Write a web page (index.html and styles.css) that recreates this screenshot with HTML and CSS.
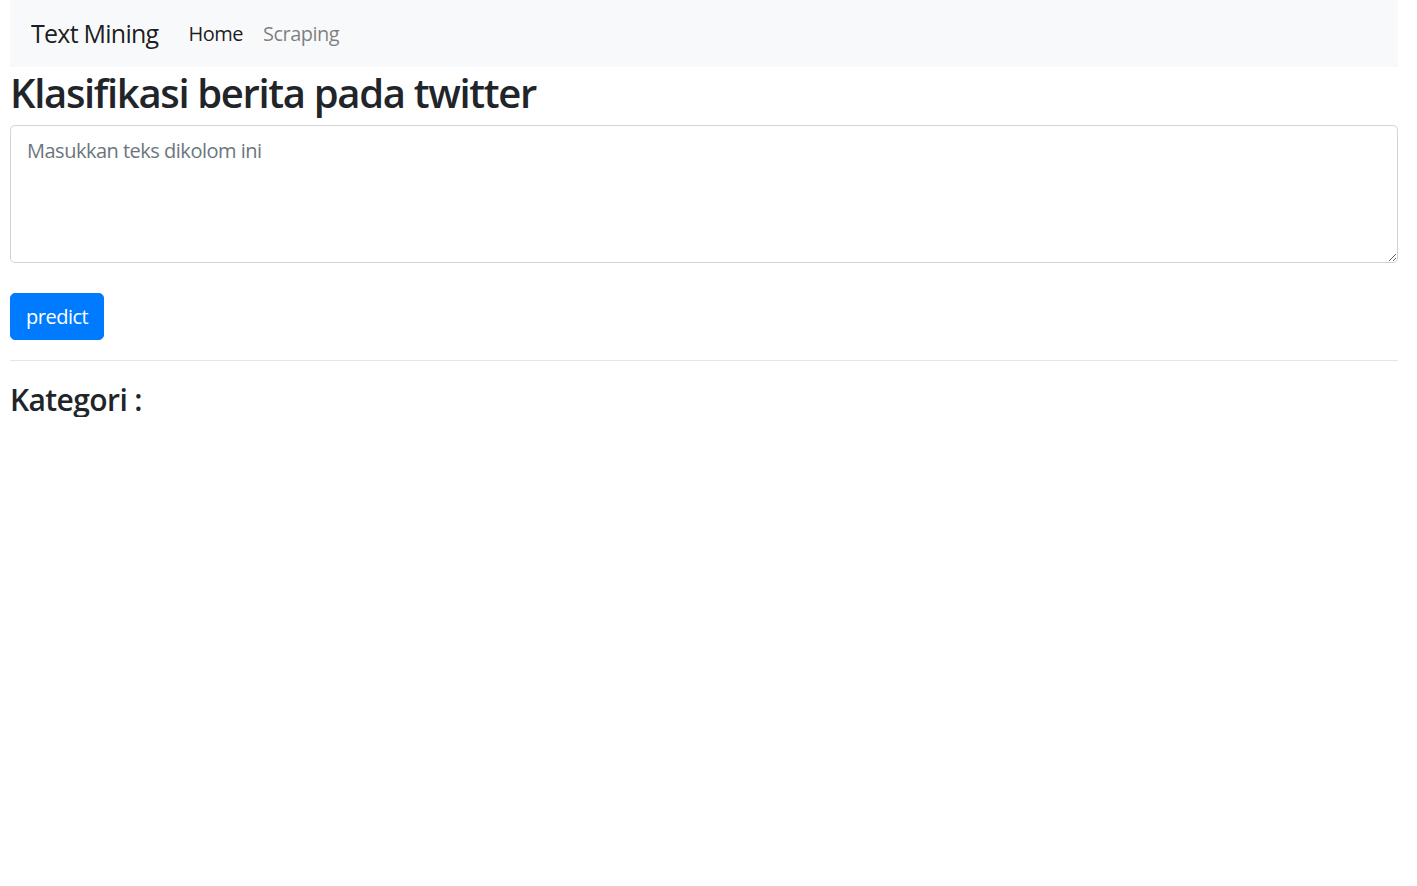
FILE: index.html
```html
<!DOCTYPE html>
<html lang="id">
<head>
<meta charset="utf-8">
<title>Text Mining</title>
<link rel="stylesheet" href="styles.css">
</head>
<body>
<div class="page">
  <nav class="navbar">
    <a class="brand" href="#">Text Mining</a>
    <ul class="nav">
      <li><a class="nav-link active" href="#">Home</a></li>
      <li><a class="nav-link" href="#">Scraping</a></li>
    </ul>
  </nav>
  <h2 class="title">Klasifikasi berita pada twitter</h2>
  <form class="form">
    <textarea class="form-control" rows="4" placeholder="Masukkan teks dikolom ini"></textarea>
    <button class="btn" type="button">predict</button>
  </form>
  <hr class="divider">
  <h4 class="result">Kategori :</h4>
</div>
</body>
</html>
```
FILE: styles.css
```css
html, body {
  margin: 0;
  padding: 0;
  background: #fff;
}
body {
  font-family: "Open Sans", "Noto Sans", sans-serif;
  color: #212529;
  font-size: 20px;
  line-height: 1.5;
  letter-spacing: -0.5px;
}
.page {
  padding: 0 19px 0 10px;
}
.navbar {
  display: flex;
  align-items: center;
  height: 67px;
  box-sizing: border-box;
  padding: 0 20px 0 21px;
  background: #f8f9fa;
}
.brand {
  font-size: 25px;
  color: rgba(0, 0, 0, 0.9);
  text-decoration: none;
  margin-right: 20px;
  line-height: 37px;
  letter-spacing: -0.75px;
}
.nav {
  display: flex;
  list-style: none;
  margin: 0;
  padding: 0;
}
.nav-link {
  display: block;
  padding: 10px;
  color: rgba(0, 0, 0, 0.5);
  text-decoration: none;
  font-size: 20px;
  line-height: 30px;
}
.nav-link.active {
  color: rgba(0, 0, 0, 0.9);
}
.title {
  margin: 0 0 8px 0;
  padding-top: 2px;
  font-size: 40px;
  font-weight: 600;
  line-height: 48px;
  letter-spacing: -1.33px;
}
.form {
  display: flex;
  flex-direction: column;
  align-items: flex-start;
}
.form-control {
  display: block;
  width: 100%;
  box-sizing: border-box;
  height: 138px;
  padding: 10px 16px 6px 16px;
  font-family: inherit;
  font-size: 20px;
  line-height: 30px;
  letter-spacing: -0.5px;
  color: #495057;
  border: 1px solid #ced4da;
  border-radius: 5px;
  margin: 0 0 30px 0;
}
.form-control::placeholder {
  color: #6c757d;
}
.btn {
  font-family: inherit;
  font-size: 20px;
  line-height: 30px;
  letter-spacing: -0.5px;
  padding: 7.5px 15px;
  height: 47px;
  color: #fff;
  background: #007bff;
  border: 1px solid #007bff;
  border-radius: 5px;
}
.divider {
  margin: 20px 0;
  border: 0;
  border-top: 1px solid rgba(0, 0, 0, 0.1);
}
.result {
  margin: 0;
  padding-top: 1px;
  font-size: 30px;
  font-weight: 600;
  line-height: 35px;
  letter-spacing: -0.6px;
}
```
